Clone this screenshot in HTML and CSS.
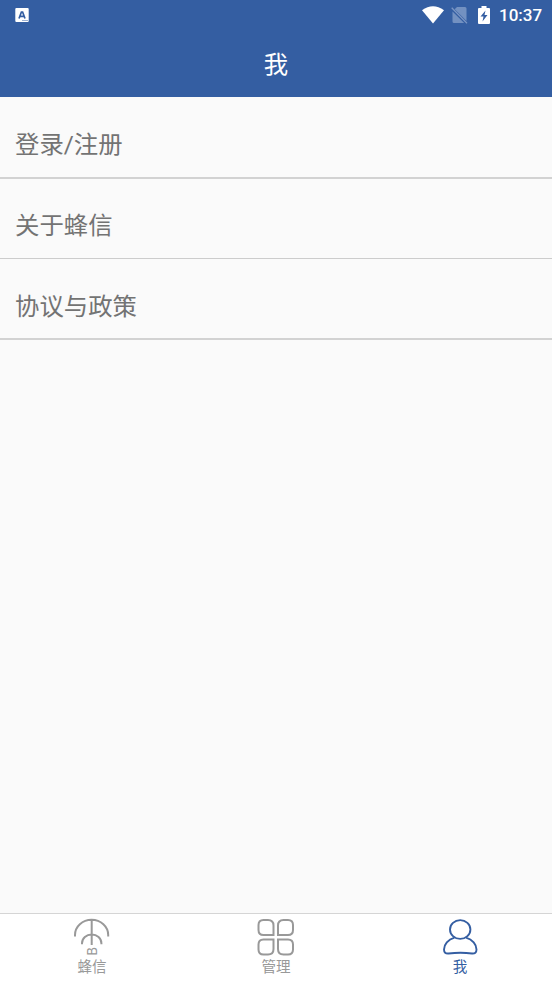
FILE: index.html
```html
<!DOCTYPE html>
<html lang="zh-CN">
<head>
<meta charset="utf-8">
<title>我</title>
<link rel="stylesheet" href="styles.css">
</head>
<body>
<header class="header">
  <div class="status">
    <svg class="status-app" width="14" height="15" viewBox="0 0 14 15"><rect x=".3" y=".1" width="13.4" height="14" rx="1" fill="#fff"/><path d="M4 10.500 6.400 4h1.200L10 10.500M5 8.300h4" fill="none" stroke="#345ea2" stroke-width="1.700"/><path d="M7 12.500h6" stroke="#9eb2d2"/></svg>
    <svg class="status-wifi" width="22" height="18" viewBox="0 0 22 18"><path d="M0 4.200Q11-3.800 22 4.200L11 17.400Z" fill="#fff"/></svg>
    <svg class="status-sim" width="17" height="18" viewBox="0 0 17 18"><path d="M6 1h8q1.500 0 1.500 1.500V15L3.700 3.300ZM1.500 5.500 13.200 17H3q-1.500 0-1.500-1.500Z" fill="#7391c1"/><path d="m.7 1.700 15.300 15.500" stroke="#7b96c4" stroke-width="1.300"/></svg>
    <svg class="status-battery" width="12" height="18" viewBox="0 0 12 18"><path d="M3.500 0h5v2H11q1 0 1 1v14q0 1-1 1H1q-1 0-1-1V3q0-1 1-1h2.500Z" fill="#fff"/><path d="M7.500 4.500 2.500 10.500h3L4.500 15.500l5-6.500h-3Z" fill="#345ea2"/></svg>
    <span class="clock">10:37</span>
  </div>
  <h1 class="title">我</h1>
</header>
<main class="list">
  <a class="row row-thick">登录/注册</a>
  <a class="row">关于蜂信</a>
  <a class="row row-thick">协议与政策</a>
</main>
<nav class="tabs">
  <a class="tab">
    <svg width="38" height="38" viewBox="0 0 38 38" fill="none" stroke="#999" stroke-width="2"><path d="M2 18.500v-1.500a16.600 15.200 0 0 1 33.200 0v1.500M18.700 2v25M9 26.300v-1a9.700 8.800 0 0 1 19.400 0v1"/><text class="mark" transform="translate(23.600 37.500) rotate(-90) scale(.9 1.050)">B</text></svg>
    <span>蜂信</span>
  </a>
  <a class="tab">
    <svg width="38" height="38" viewBox="0 0 38 38" fill="none" stroke="#999" stroke-width="2"><path d="M6.500 2H11q5.500 0 5.500 5.500V17h-10Q1.500 17 1.500 12V7q0-5 5-5ZM26.500 2h4.500q5 0 5 5v5q0 5-5 5h-10V7.500Q21 2 26.500 2ZM6.500 21.500h10V31q0 5.500-5.500 5.500H6.500q-5 0-5-5v-5q0-5 5-5ZM21 21.500h10q5 0 5 5v5q0 5-5 5h-4.500q-5.500 0-5.500-5.500Z"/></svg>
    <span>管理</span>
  </a>
  <a class="tab tab-active">
    <svg width="38" height="38" viewBox="0 0 38 38" fill="none" stroke="#345ea2" stroke-width="1.900"><ellipse cx="19.200" cy="11.500" rx="10.200" ry="9.400"/><path d="M13.500 19.700C7 21.500 3 26.500 3 31.500c0 3 1.500 4.200 4.500 4 8-1 16-1 23.500 0 3 .2 4.500-1 4.500-4 0-5-4-10-10.500-11.800"/></svg>
    <span>我</span>
  </a>
</nav>
</body>
</html>
```
FILE: styles.css
```css
* { box-sizing: border-box; }
body {
  margin: 0;
  height: 981px;
  display: flex;
  flex-direction: column;
  background: #fafafa;
  font-family: Roboto, "Noto Sans CJK SC", sans-serif;
}
.header { height: 97px; background: #345ea2; color: #fff; }
.status {
  height: 30px;
  padding: 0 10px 0 15px;
  display: flex;
  align-items: center;
}
.status-wifi { margin-left: auto; }
.status-sim { margin-left: 7px; }
.status-battery { margin-left: 10px; }
.clock {
  width: 43px;
  margin-left: 9px;
  font-size: 17px;
  line-height: 20px;
  font-weight: 500;
  white-space: nowrap;
}
.title {
  margin: 0;
  height: 67px;
  font-size: 24.400px;
  font-weight: 400;
  line-height: 69px;
  text-align: center;
}
.list { flex: 1; }
.row {
  display: block;
  height: 80px;
  padding: 11px 15px 0;
  border-bottom: 1px solid #ccc;
  color: #737373;
  font-size: 24.400px;
  line-height: 72px;
}
.row-thick { height: 81px; border-bottom: 2px solid #d2d2d2; }
.row:first-child { height: 82px; padding-top: 12px; }
.row:last-child { padding-top: 12px; }
.tabs {
  height: 68px;
  display: flex;
  border-top: 1px solid #d5d5d5;
  background: #fff;
  color: #999;
  font-size: 14.600px;
}
.tab {
  flex: 1;
  padding-top: 4px;
  display: flex;
  flex-direction: column;
  align-items: center;
}
.tab span { line-height: 22px; }
.tab-active { color: #345ea2; }
.mark {
  font: 14px "Liberation Sans", sans-serif;
  fill: #999;
  stroke: none;
}
```
